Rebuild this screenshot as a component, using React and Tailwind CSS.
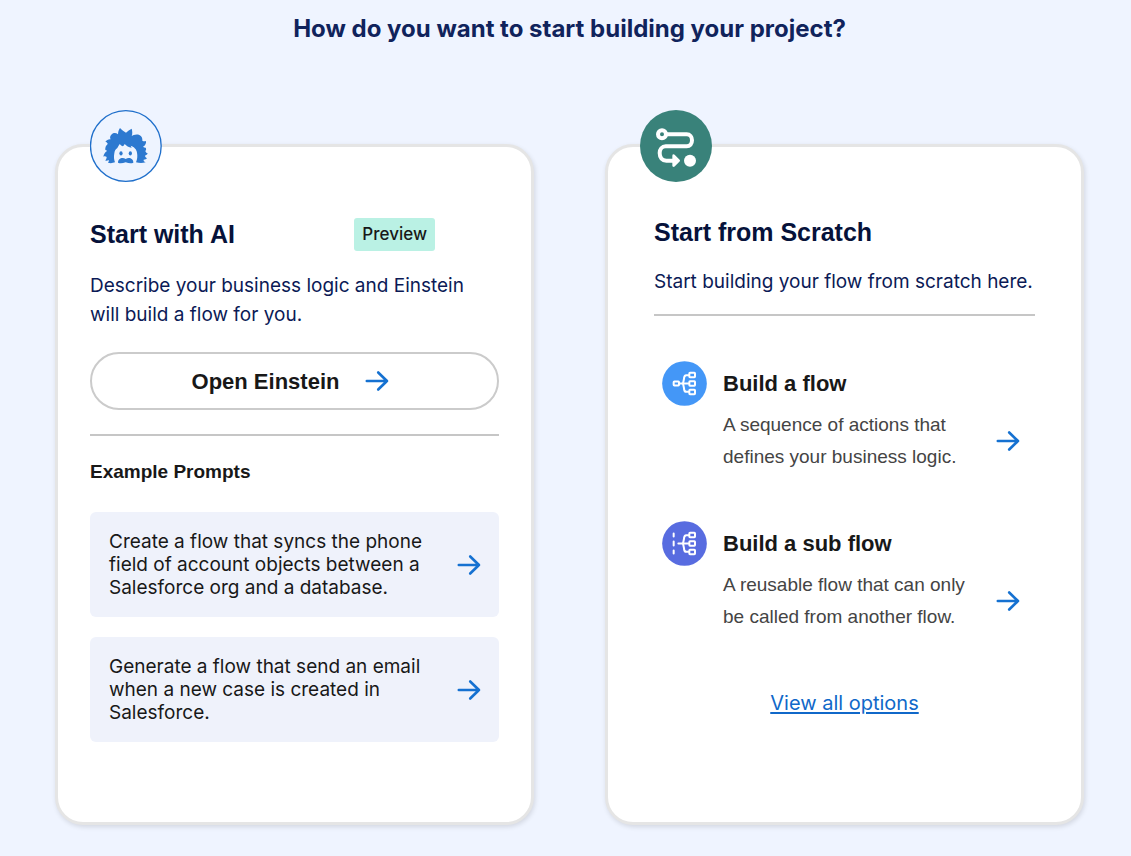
function Arrow() {
  return (
    <svg className="h-6 w-6 shrink-0" viewBox="0 0 24 24" fill="none" stroke="#1571d1" strokeWidth="2.6" strokeLinecap="round" strokeLinejoin="round" aria-hidden="true">
      <path d="M1.800 12H22M13.200 3.500L22 12L13.200 20.500" />
    </svg>
  );
}

function EinsteinIcon() {
  return (
    <svg className="relative -mt-[37px] h-18 w-18" viewBox="30 30 216 216" aria-hidden="true">
      <circle cx="137.500" cy="138" r="106" fill="#eef4ff" stroke="#1f6fcb" strokeWidth="4" />
      <path
        fill="#2d79d0"
        d="M84 188C89 190 98 190 105 187C102 180 101 170 103 160C104 152 107 147 112 144C115 139 118 134 119 132C122 135 125 138 129 139C131 137 133 135 134 132C139 138 146 142 155 143L152 137C162 140 170 148 171 158C173 168 172 178 168 187C178 190 188 190 197 187C192 185 190 182 191 179C196 179 199 177 201 175C198 173 195 170 195 167C198 166 202 164 203 160C199 159 197 156 196 153C199 150 199 146 197 143C194 143 191 142 189 140C196 137 199 130 198 123C194 124 190 124 187 122C188 115 185 108 178 105C169 102 159 105 155 109C158 101 157 93 155 86C149 89 143 93 138 98C132 95 126 90 120 84C116 90 114 96 114 103C107 97 98 99 94 104C90 108 89 113 92 118C86 117 80 120 76 125C80 126 83 129 83 132C78 136 75 143 76 150C78 150 80 151 81 153C75 157 71 163 70 170C74 168 78 169 80 171C80 175 78 179 76 182C80 183 83 182 86 180C87 183 86 186 84 188Z"
      />
      <ellipse cx="123" cy="160" rx="4.800" ry="6.500" fill="#2d79d0" />
      <ellipse cx="151" cy="160" rx="4.800" ry="6.500" fill="#2d79d0" />
      <path fill="#2d79d0" d="M137 177C131 173 123 173 118 178C115 181 114 184 114 188C120 191 128 190 137 187C146 190 154 191 160 188C160 184 159 181 156 178C151 173 143 173 137 177Z" />
    </svg>
  );
}

function RouteIcon() {
  return (
    <svg className="relative -mt-[37px] h-18 w-18" viewBox="30 30 216 216" fill="none" aria-hidden="true">
      <circle cx="138" cy="138" r="108" fill="#39827a" />
      <g stroke="#fff" strokeWidth="12" strokeLinecap="round" strokeLinejoin="round">
        <circle cx="96" cy="103" r="12" />
        <path d="M110 103H170C180 103 186 111 186 121C186 132 180 139 170 139H107C96 139 89 148 89 159C89 173 97 182 109 182H130" />
      </g>
      <path d="M131 167L146 182L131 197Z" fill="#fff" stroke="#fff" strokeWidth="8" strokeLinejoin="round" />
      <circle cx="180" cy="182" r="18" fill="#fff" />
    </svg>
  );
}

function FlowIcon({ sub }) {
  return (
    <svg className="h-[45px] w-[45px] shrink-0" viewBox="37 32.5 135 135" fill="none" stroke="#fff" strokeWidth="6" strokeLinecap="round" strokeLinejoin="round" aria-hidden="true">
      <circle cx="104.500" cy="100" r="67" fill={sub ? "#586ce0" : "#4497f7"} stroke="none" />
      {sub ? (
        <path d="M72 70V79M72 94V106M72 121V130M86 100H116" />
      ) : (
        <>
          <rect x="72" y="94" width="16" height="12" rx="2" />
          <path d="M88 100H116" />
        </>
      )}
      <path d="M117 75H110C105 75 103 80 103 86L100 100L103 114C103 120 105 125 110 125H117" />
      <rect x="119" y="68" width="17" height="13" rx="2" />
      <rect x="119" y="93.500" width="17" height="13" rx="2" />
      <rect x="119" y="119" width="17" height="13" rx="2" />
    </svg>
  );
}

const cardClass =
  "min-w-0 flex-1 rounded-[28px] border-3 border-[#e5e5e5] bg-white px-8 shadow-[1px_2px_5px_rgba(0,0,0,0.12)]";

function Prompt({ children }) {
  return (
    <button type="button" className="flex w-full items-center justify-between gap-4 rounded-md bg-[#eff2fb] py-[18px] pr-[18px] pl-[19px] text-left text-[19px] leading-[23px] text-[#181818]">
      <span className="max-w-[324px]">{children}</span>
      <Arrow />
    </button>
  );
}

function Option({ sub, title, children }) {
  return (
    <a href="#" className="flex gap-4 font-['Liberation_Sans',sans-serif]">
      <FlowIcon sub={sub} />
      <span className="flex-1">
        <span className="block text-[22px] leading-[45px] font-bold text-[#181818]">{title}</span>
        <span className="flex items-center justify-between gap-4 pt-[3px]">
          <span className="max-w-[250px] text-[19px] leading-8 text-[#444]">{children}</span>
          <Arrow />
        </span>
      </span>
    </a>
  );
}

export default function App() {
  return (
    <main className="min-h-screen bg-[#eff4ff] pt-3 pr-[47px] pb-[31px] pl-[55px] font-[Inter,sans-serif]">
      <h1 className="text-center text-[24px] leading-[34px] font-bold text-[#10235c]">
        How do you want to start building your project?
      </h1>
      <div className="mt-[98px] flex gap-[71px]">
        <section className={cardClass}>
          <EinsteinIcon />
          <div className="mt-9 flex items-center justify-between pr-16">
            <h2 className="font-['Liberation_Sans',sans-serif] text-[25px] leading-[33px] font-bold text-[#06123a]">Start with AI</h2>
            <span className="rounded-[3px] bg-[#baf1e4] px-2 text-[17px] leading-[33px] font-medium text-[#181818]">Preview</span>
          </div>
          <p className="mt-5 max-w-[400px] text-[19px] leading-[29px] text-[#0b1a56]">
            Describe your business logic and Einstein will build a flow for you.
          </p>
          <button type="button" className="mt-[23px] flex h-[58px] w-full items-center justify-center gap-[26px] rounded-full border-2 border-[#cbcbcb] pr-2 font-['Liberation_Sans',sans-serif] text-[22px] font-bold text-[#181818]">
            Open Einstein
            <Arrow />
          </button>
          <hr className="mt-6 border-t-2 border-[#c6c6c6]" />
          <h3 className="mt-6 font-['Liberation_Sans',sans-serif] text-[19px] leading-6 font-bold text-[#181818]">Example Prompts</h3>
          <div className="mt-7 mb-20 flex flex-col gap-5">
            <Prompt>Create a flow that syncs the phone field of account objects between a Salesforce org and a database.</Prompt>
            <Prompt>Generate a flow that send an email when a new case is created in Salesforce.</Prompt>
          </div>
        </section>
        <section className={cardClass}>
          <RouteIcon />
          <div className="mt-[34px] px-[14px]">
            <h2 className="font-['Liberation_Sans',sans-serif] text-[25px] leading-[33px] font-bold text-[#06123a]">Start from Scratch</h2>
            <p className="mt-[18px] text-[19px] leading-[29px] text-[#0b1a56]">Start building your flow from scratch here.</p>
            <hr className="mt-[18px] border-t-2 border-[#c6c6c6]" />
            <div className="mt-[45px] flex flex-col gap-12 pr-[15px] pl-2">
              <Option title="Build a flow">A sequence of actions that defines your business logic.</Option>
              <Option sub title="Build a sub flow">A reusable flow that can only be called from another flow.</Option>
            </div>
            <div className="mt-14 text-center">
              <a href="#" className="text-[20px] leading-7 text-[#1068c9] underline underline-offset-2">View all options</a>
            </div>
          </div>
        </section>
      </div>
    </main>
  );
}
